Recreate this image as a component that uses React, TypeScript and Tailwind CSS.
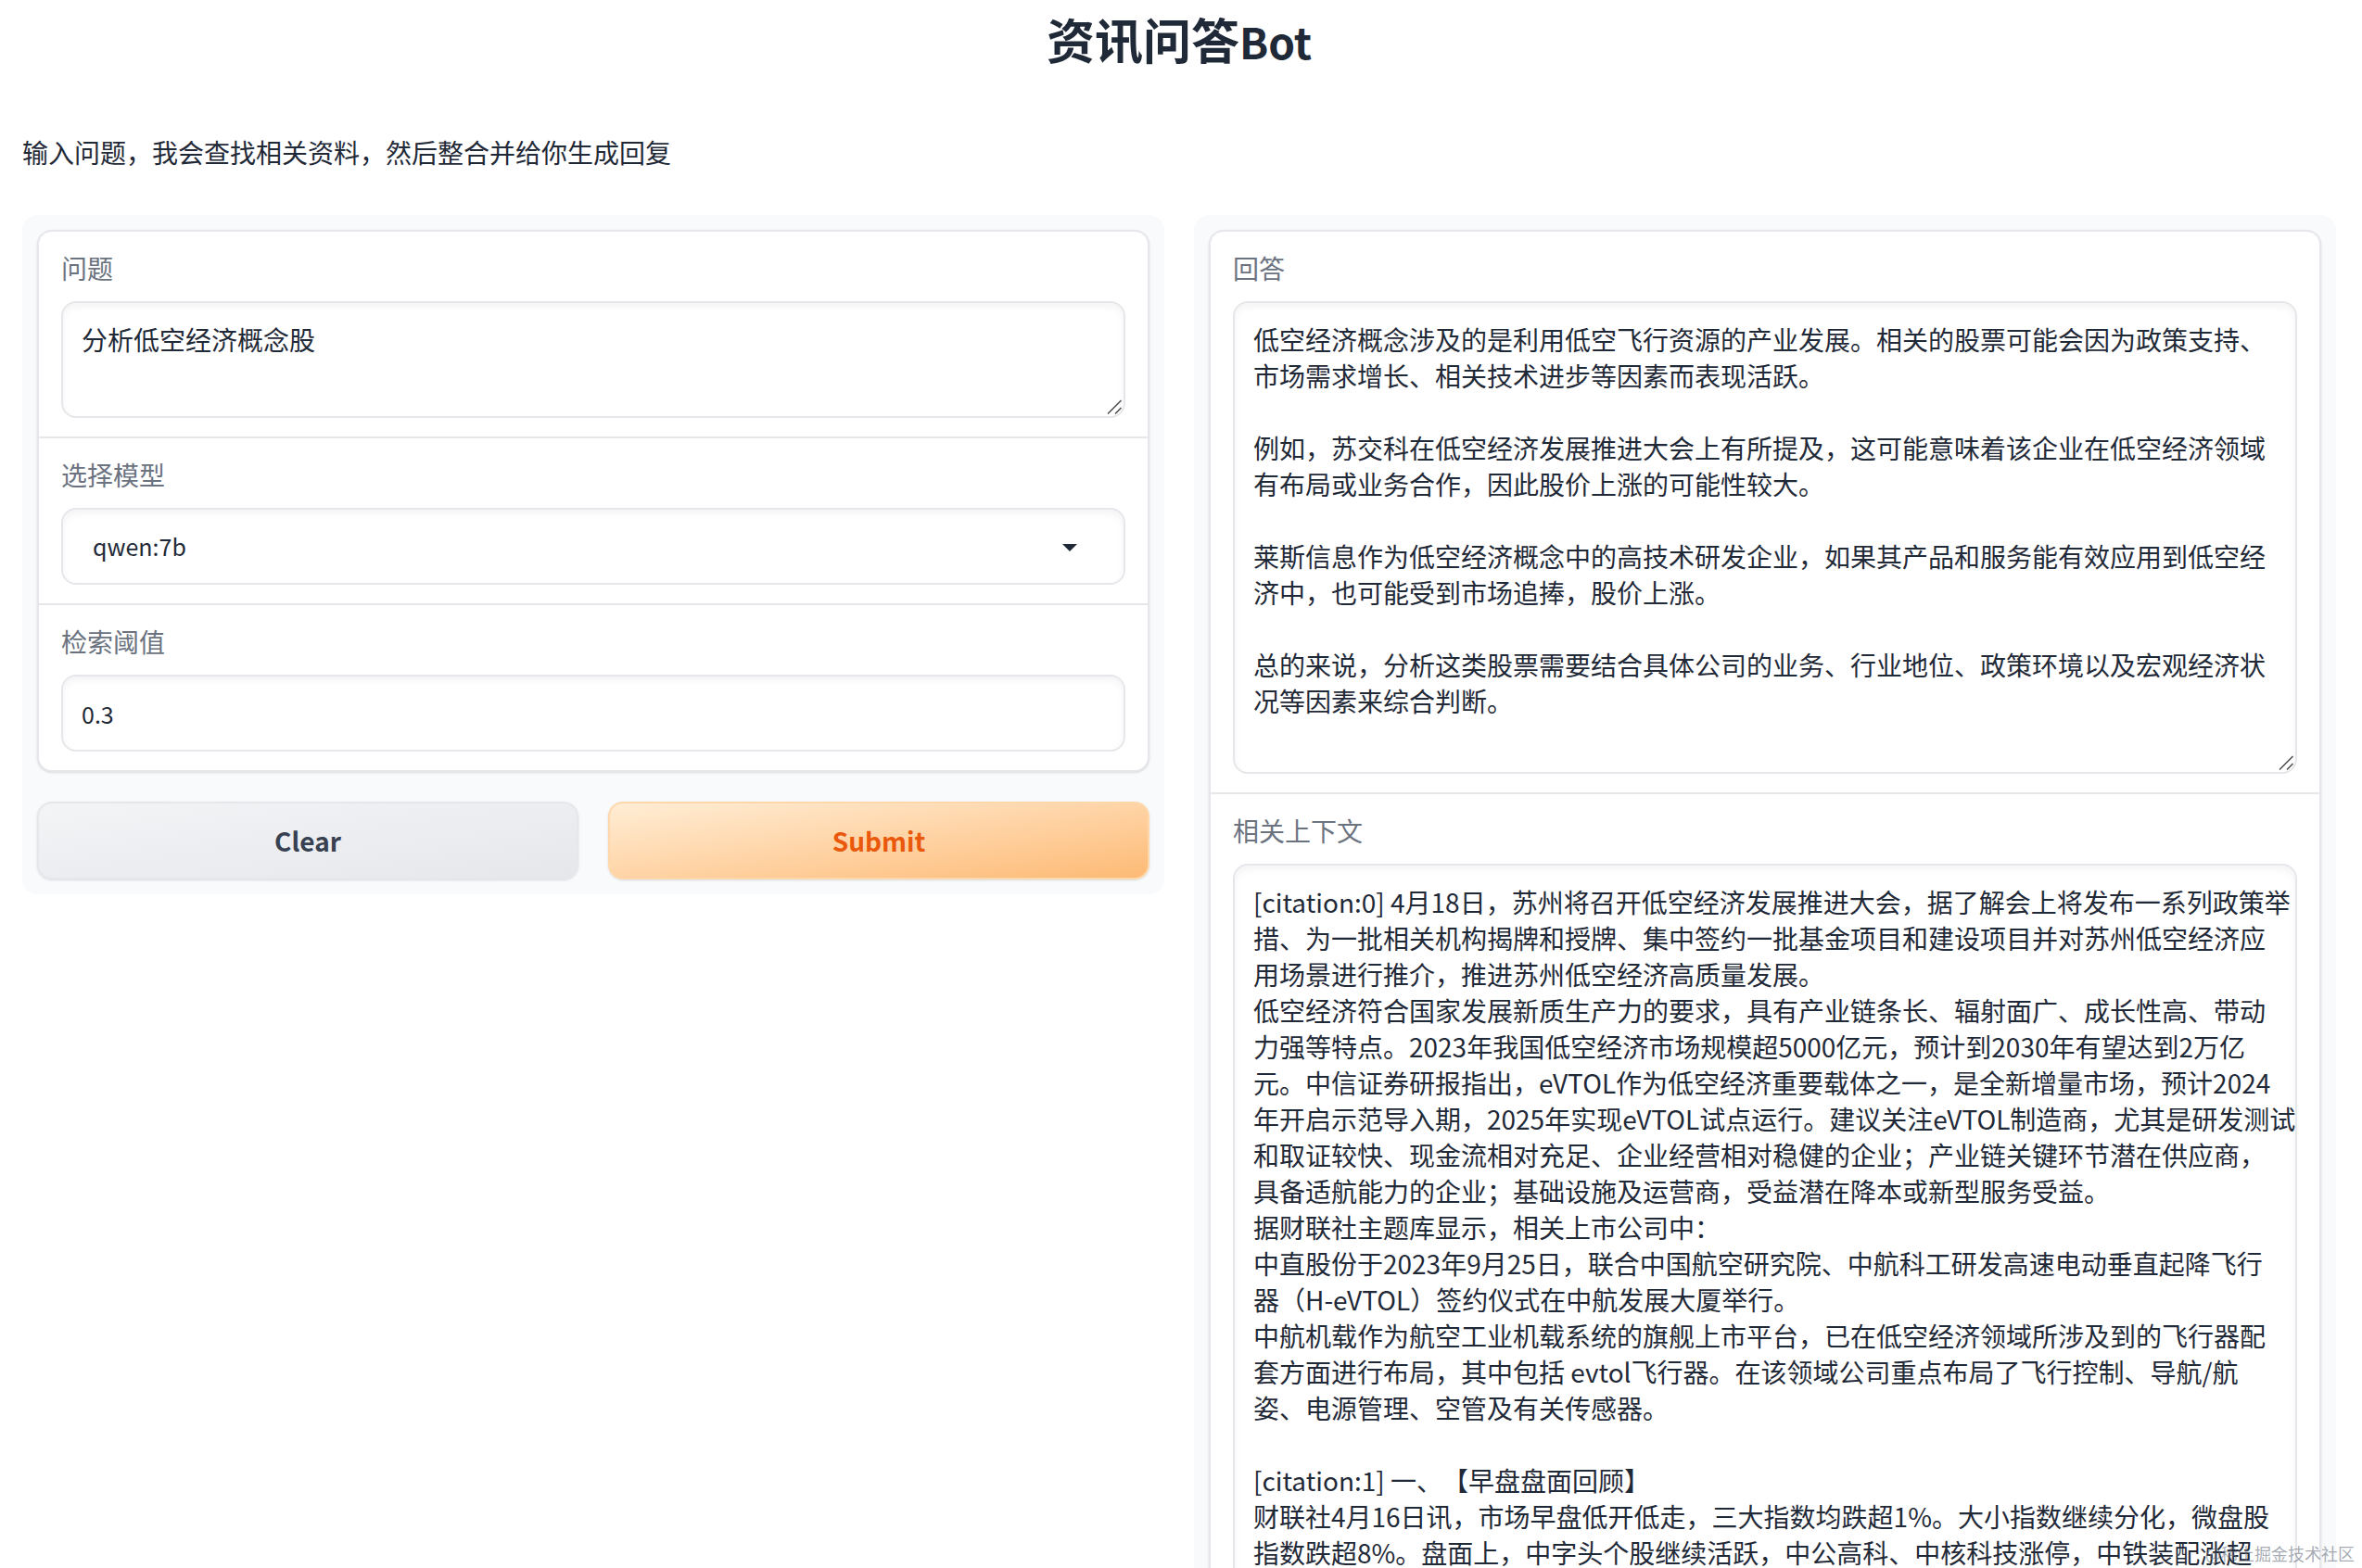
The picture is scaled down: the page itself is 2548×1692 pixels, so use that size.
import { useState } from "react";

const MODELS = ["qwen:7b"];

const ANSWER = `低空经济概念涉及的是利用低空飞行资源的产业发展。相关的股票可能会因为政策支持、
市场需求增长、相关技术进步等因素而表现活跃。

例如，苏交科在低空经济发展推进大会上有所提及，这可能意味着该企业在低空经济领域
有布局或业务合作，因此股价上涨的可能性较大。

莱斯信息作为低空经济概念中的高技术研发企业，如果其产品和服务能有效应用到低空经
济中，也可能受到市场追捧，股价上涨。

总的来说，分析这类股票需要结合具体公司的业务、行业地位、政策环境以及宏观经济状
况等因素来综合判断。`;

const CONTEXT = `[citation:0] 4月18日，苏州将召开低空经济发展推进大会，据了解会上将发布一系列政策举
措、为一批相关机构揭牌和授牌、集中签约一批基金项目和建设项目并对苏州低空经济应
用场景进行推介，推进苏州低空经济高质量发展。
低空经济符合国家发展新质生产力的要求，具有产业链条长、辐射面广、成长性高、带动
力强等特点。2023年我国低空经济市场规模超5000亿元，预计到2030年有望达到2万亿
元。中信证券研报指出，eVTOL作为低空经济重要载体之一，是全新增量市场，预计2024
年开启示范导入期，2025年实现eVTOL试点运行。建议关注eVTOL制造商，尤其是研发测试
和取证较快、现金流相对充足、企业经营相对稳健的企业；产业链关键环节潜在供应商，
具备适航能力的企业；基础设施及运营商，受益潜在降本或新型服务受益。
据财联社主题库显示，相关上市公司中：
中直股份于2023年9月25日，联合中国航空研究院、中航科工研发高速电动垂直起降飞行
器（H-eVTOL）签约仪式在中航发展大厦举行。
中航机载作为航空工业机载系统的旗舰上市平台，已在低空经济领域所涉及到的飞行器配
套方面进行布局，其中包括 evtol飞行器。在该领域公司重点布局了飞行控制、导航/航
姿、电源管理、空管及有关传感器。

[citation:1] 一、【早盘盘面回顾】
财联社4月16日讯，市场早盘低开低走，三大指数均跌超1%。大小指数继续分化，微盘股
指数跌超8%。盘面上，中字头个股继续活跃，中公高科、中核科技涨停，中铁装配涨超`;

const fieldClass =
  "block w-full rounded-2xl border-2 border-gray-200 bg-white px-5 text-[#1f2937] shadow-[inset_0_4px_8px_rgba(0,0,0,0.05)] outline-none";

interface FieldProps {
  id: string;
  label: string;
  children: React.ReactNode;
}

function Field({ id, label, children }: FieldProps) {
  return (
    <div className="px-6 py-5">
      <label
        htmlFor={id}
        className="mb-4 block text-[28px] leading-[39px] text-[#6b7280]"
      >
        {label}
      </label>
      {children}
    </div>
  );
}

interface TextAreaProps {
  id: string;
  value: string;
  height: string;
  onChange?: (value: string) => void;
}

function TextArea({ id, value, height, onChange }: TextAreaProps) {
  return (
    <div className="relative">
      <textarea
        id={id}
        wrap="off"
        value={value}
        readOnly={!onChange}
        onChange={(e) => onChange?.(e.target.value)}
        className={`${fieldClass} ${height} resize-none overflow-hidden py-5 text-[28px] leading-[39px]`}
      />
      {/* Resize grip */}
      <svg
        className="pointer-events-none absolute right-1 bottom-1 size-4"
        viewBox="0 0 16 16"
        stroke="#4b4b4b"
        strokeWidth="1.5"
      >
        <path d="M1 15.5 15.5 1M9 15.5 15.5 9" />
      </svg>
    </div>
  );
}

export default function App() {
  const [question, setQuestion] = useState("分析低空经济概念股");
  const [model, setModel] = useState(MODELS[0]);
  const [threshold, setThreshold] = useState("0.3");

  const clear = () => {
    setQuestion("");
    setThreshold("");
  };

  return (
    <div className="relative h-screen overflow-hidden bg-white pr-7 pl-6 font-['Noto_Sans_CJK_SC',sans-serif] text-[#1f2937] [text-spacing-trim:space-all]">
      <h1 className="pt-1.5 text-center text-[52px] leading-[72px] font-bold">
        资讯问答<span className="text-[46px]">Bot</span>
      </h1>
      <p className="mt-[65px] text-[28px] leading-[39px]">
        输入问题，我会查找相关资料，然后整合并给你生成回复
      </p>

      <main className="mt-12 grid grid-cols-2 items-start gap-8">
        {/* Inputs */}
        <form
          onSubmit={(e) => e.preventDefault()}
          className="flex flex-col gap-8 rounded-2xl bg-gray-50 p-4"
        >
          <div className="divide-y-2 divide-gray-200 rounded-2xl border-2 border-gray-200 bg-white shadow-sm">
            <Field id="question" label="问题">
              <TextArea
                id="question"
                value={question}
                height="h-[126px]"
                onChange={setQuestion}
              />
            </Field>
            <Field id="model" label="选择模型">
              <div className="relative">
                <select
                  id="model"
                  value={model}
                  onChange={(e) => setModel(e.target.value)}
                  className={`${fieldClass} h-[83px] appearance-none pl-8 text-[25px]`}
                >
                  {MODELS.map((name) => (
                    <option key={name}>{name}</option>
                  ))}
                </select>
                <svg
                  className="pointer-events-none absolute top-[39px] right-[52px] h-2 w-4"
                  viewBox="0 0 16 8"
                  fill="#1f2937"
                >
                  <path d="M0 0h16L8 8z" />
                </svg>
              </div>
            </Field>
            <Field id="threshold" label="检索阈值">
              <input
                id="threshold"
                value={threshold}
                onChange={(e) => setThreshold(e.target.value)}
                className={`${fieldClass} h-[83px] text-[25px]`}
              />
            </Field>
          </div>

          <div className="grid grid-cols-2 gap-8">
            <button
              type="button"
              onClick={clear}
              className="h-[84px] rounded-2xl border-2 border-gray-200 bg-linear-to-br from-[#f3f4f6] to-[#e5e7eb] text-[28px] font-bold text-[#374151] shadow-sm"
            >
              Clear
            </button>
            <button
              type="submit"
              className="h-[84px] rounded-2xl border-2 border-[#fed7aa] bg-linear-to-br from-[#ffedd5] to-[#fdba74] text-[28px] font-bold text-[#ea580c] shadow-sm"
            >
              Submit
            </button>
          </div>
        </form>

        {/* Outputs */}
        <section className="rounded-2xl bg-gray-50 p-4">
          <div className="divide-y-2 divide-gray-200 rounded-2xl border-2 border-gray-200 bg-white shadow-sm">
            <Field id="answer" label="回答">
              <TextArea id="answer" value={ANSWER} height="h-[510px]" />
            </Field>
            <Field id="context" label="相关上下文">
              <TextArea id="context" value={CONTEXT} height="h-[824px]" />
            </Field>
          </div>
        </section>
      </main>

      <span className="absolute right-2 bottom-1 text-[18px] leading-6 text-gray-500/60">
        @稀土掘金技术社区
      </span>
    </div>
  );
}
